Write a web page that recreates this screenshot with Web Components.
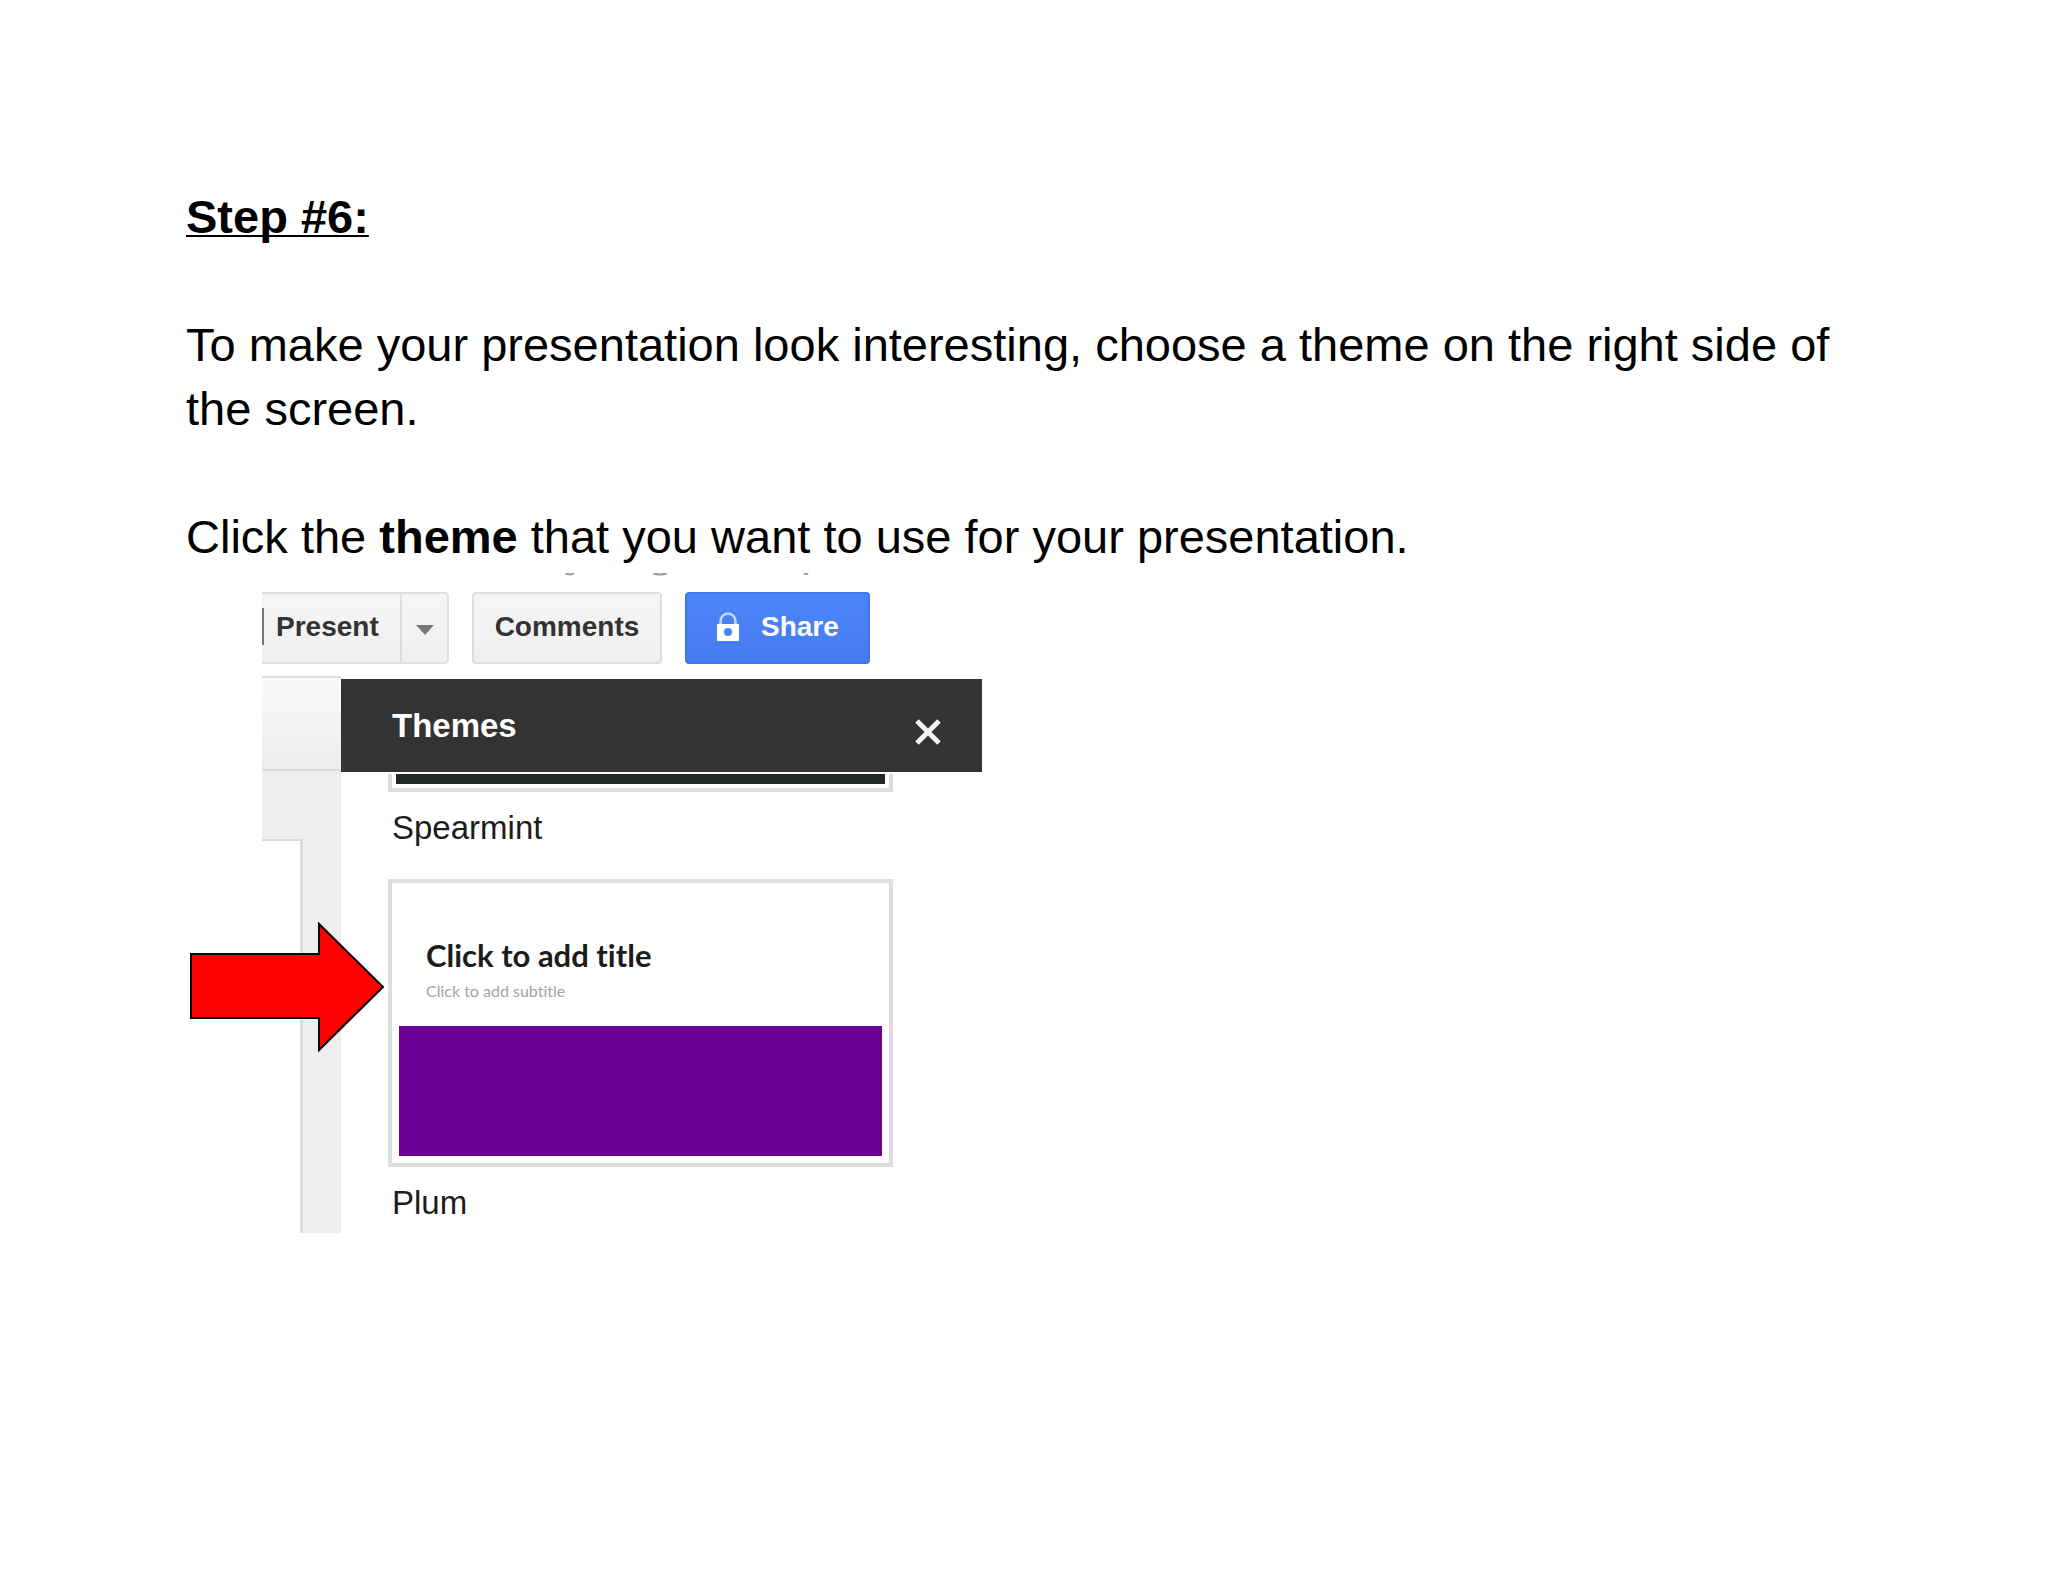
<!DOCTYPE html>
<html lang="en">
<head>
<meta charset="utf-8">
<title>Step #6</title>
<style>
  body { margin: 0; background: #fff; color: #000; font-family: "Liberation Sans", Arial, sans-serif; }
</style>
</head>
<body>
<guide-page>
  <guide-heading>Step #6:</guide-heading>
  <guide-text class="spaced">To make your presentation look interesting, choose a theme on the right side of the screen.</guide-text>
  <guide-text>Click the <b>theme</b> that you want to use for your presentation.</guide-text>
  <editor-figure>
    <editor-toolbar slot="toolbar"></editor-toolbar>
    <slide-edge slot="canvas"></slide-edge>
    <themes-panel slot="panel">
      <theme-card name="Spearmint" cut></theme-card>
      <theme-card name="Plum">
        <span slot="title">Click to add title</span>
        <span slot="subtitle">Click to add subtitle</span>
      </theme-card>
    </themes-panel>
    <pointer-arrow slot="pointer"></pointer-arrow>
  </editor-figure>
</guide-page>

<script>
const define = (name, html, setup) => {
  const template = document.createElement('template');
  template.innerHTML = html;
  customElements.define(name, class extends HTMLElement {
    constructor() {
      super();
      this.attachShadow({ mode: 'open' }).append(template.content.cloneNode(true));
    }
    connectedCallback() { if (setup) setup(this, this.shadowRoot); }
  });
};

define('guide-page', `
  <style>
    :host { display: block; }
    main { display: flex; flex-direction: column; padding: 185px 186px 64px; }
  </style>
  <main><slot></slot></main>`);

define('guide-heading', `
  <style>
    :host { display: block; margin-bottom: 64px; }
    h1 { margin: 0; font-size: 47px; line-height: 64px; font-weight: bold;
      text-decoration: underline; text-decoration-thickness: 2px;
      text-underline-offset: 2px; text-decoration-skip-ink: none; }
  </style>
  <h1><slot></slot></h1>`);

define('guide-text', `
  <style>
    :host { display: block; }
    :host(.spaced) { margin-bottom: 64px; }
    p { margin: 0; font-size: 47px; line-height: 64px; }
  </style>
  <p><slot></slot></p>`);

define('editor-figure', `
  <style>
    :host { display: block; position: relative; padding: 4px 0 0 76px; }
    figure { margin: 0; width: 100%; max-width: 720px; }
    .body { display: flex; }
    ::slotted([slot=panel]) { flex: 1; }
  </style>
  <figure>
    <slot name="toolbar"></slot>
    <div class="body"><slot name="canvas"></slot><slot name="panel"></slot></div>
  </figure>
  <slot name="pointer"></slot>`);

define('editor-toolbar', `
  <style>
    :host { display: block; }
    .account { display: block; height: 19px; }
    .row { display: flex; gap: 23px; margin-bottom: 12px; }
    button { box-sizing: border-box; height: 72px; margin: 0; padding: 0 0 3px; font: bold 28px "Liberation Sans", Arial, sans-serif;
      color: #333; background: linear-gradient(#f5f5f5, #f0f0f0); border: 2px solid #dedede; border-radius: 4px; }
    .split { display: flex; }
    .present { width: 138px; border-left: 0; border-radius: 0; border-right: 0; display: flex; align-items: center; padding-left: 0; }
    .present::before { content: ""; width: 2px; height: 37px; margin-right: 12px; background: #777; }
    .more { width: 49px; border-radius: 0 4px 4px 0; display: grid; place-items: center; padding-top: 3px; padding-bottom: 0; }
    .comments { width: 190px; }
    .share { width: 185px; display: flex; align-items: center; gap: 21px; padding-left: 29px;
      color: #fff; background: linear-gradient(#4b85fb, #477bee); border-color: #3f76ee; }
  </style>
  <svg class="account" width="720" height="19" viewBox="0 0 720 19" aria-hidden="true">
    <g fill="none" stroke="#999" stroke-width="2">
      <path d="M303 0Q308 3 312 0"/><path d="M391 0Q398 3 405 0"/><path d="M542 0Q544 2 546 0"/>
    </g>
  </svg>
  <div class="row">
    <div class="split">
      <button class="present" type="button">Present</button>
      <button class="more" type="button" aria-label="Presentation options">
        <svg width="18" height="10" viewBox="0 0 18 10"><path d="M0 0H18L9 10Z" fill="#777"/></svg>
      </button>
    </div>
    <button class="comments" type="button">Comments</button>
    <button class="share" type="button">
      <svg width="24" height="30" viewBox="0 0 24 30">
        <path d="M4.500 14V9.500a7.500 8 0 0 1 15 0V14" fill="none" stroke="#c6dbff" stroke-width="2.500"/>
        <path d="M1 12H23V29H1ZM12 16a4 4 0 1 0 0 8a4 4 0 1 0 0-8Z" fill="#fff" fill-rule="evenodd"/>
      </svg>Share
    </button>
  </div>`);

define('slide-edge', `
  <style>
    :host { display: flex; flex-direction: column; width: 79px; background: #eee; }
    .bar { height: 91px; border-top: 2px solid #dfdfdf; border-bottom: 2px solid #dadada; background: linear-gradient(#fafafa, #ececec); }
    .slide { flex: 1; width: 38px; margin-top: 68px; background: #fff; border-top: 2px solid #dadada; border-right: 3px solid #dfdddf; }
  </style>
  <div class="bar"></div><div class="slide"></div>`);

define('themes-panel', `
  <style>
    :host { display: block; margin-top: 3px; padding-bottom: 10px; background: #fff; }
    header { display: flex; justify-content: space-between; align-items: center; height: 93px; padding: 0 41px 0 51px;
      box-sizing: border-box; background: #333334; color: #fff; }
    h2 { margin: 0; font-size: 33px; line-height: 40px; }
    button { display: grid; margin-top: 12px; padding: 0; border: 0; background: none; }
    .list { display: flex; flex-direction: column; gap: 31px; padding: 2px 89px 0 47px; }
  </style>
  <header>
    <h2>Themes</h2>
    <button type="button" aria-label="Close"><svg width="26" height="26" viewBox="0 0 26 26"><path d="M2 2L24 24M24 2L2 24" stroke="#f4f4f4" stroke-width="5"/></svg></button>
  </header>
  <div class="list"><slot></slot></div>`);

define('theme-card', `
  <style>
    :host { display: block; }
    button { display: block; box-sizing: border-box; width: 100%; margin: 0; padding: 7px; text-align: left;
      font: inherit; color: inherit; background: #fff; border: 4px solid #dfdde0; border-radius: 0; }
    .text { display: block; box-sizing: border-box; height: 136px; padding: 47px 27px 0; font-variant-ligatures: none; }
    .title { display: block; font: bold 31px/36px Lato, sans-serif; font-variant-ligatures: none; color: #1c1c1c; margin-bottom: 8px; }
    .subtitle { display: block; font: 16px/20px Lato, sans-serif; font-variant-ligatures: none; color: #a4a4a4; }
    .fill { display: block; height: 130px; background: #6a0096; }
    .label { margin: 16px 0 0 4px; font-size: 33px; line-height: 40px; color: #1c1c1c; }
    :host([cut]) button { padding: 0 4px 4px; border-top: 0; }
    :host([cut]) .text { display: none; }
    :host([cut]) .fill { height: 10px; background: #202827; }
  </style>
  <button type="button" aria-labelledby="label">
    <span class="text">
      <span class="title"><slot name="title"></slot></span>
      <span class="subtitle"><slot name="subtitle"></slot></span>
    </span>
    <span class="fill"></span>
  </button>
  <div class="label" id="label"></div>`,
  (host, root) => { root.querySelector('.label').textContent = host.getAttribute('name'); });

define('pointer-arrow', `
  <style>
    :host { display: block; position: absolute; left: 3px; top: 352px; }
    svg { display: block; }
  </style>
  <svg width="196" height="132" viewBox="0 0 196 132" role="img" aria-label="Arrow pointing at the Plum theme">
    <path d="M2 33H130V3L194 66L130 129V97H2Z" fill="#f00" stroke="#000" stroke-width="2"/>
  </svg>`);
</script>
</body>
</html>
